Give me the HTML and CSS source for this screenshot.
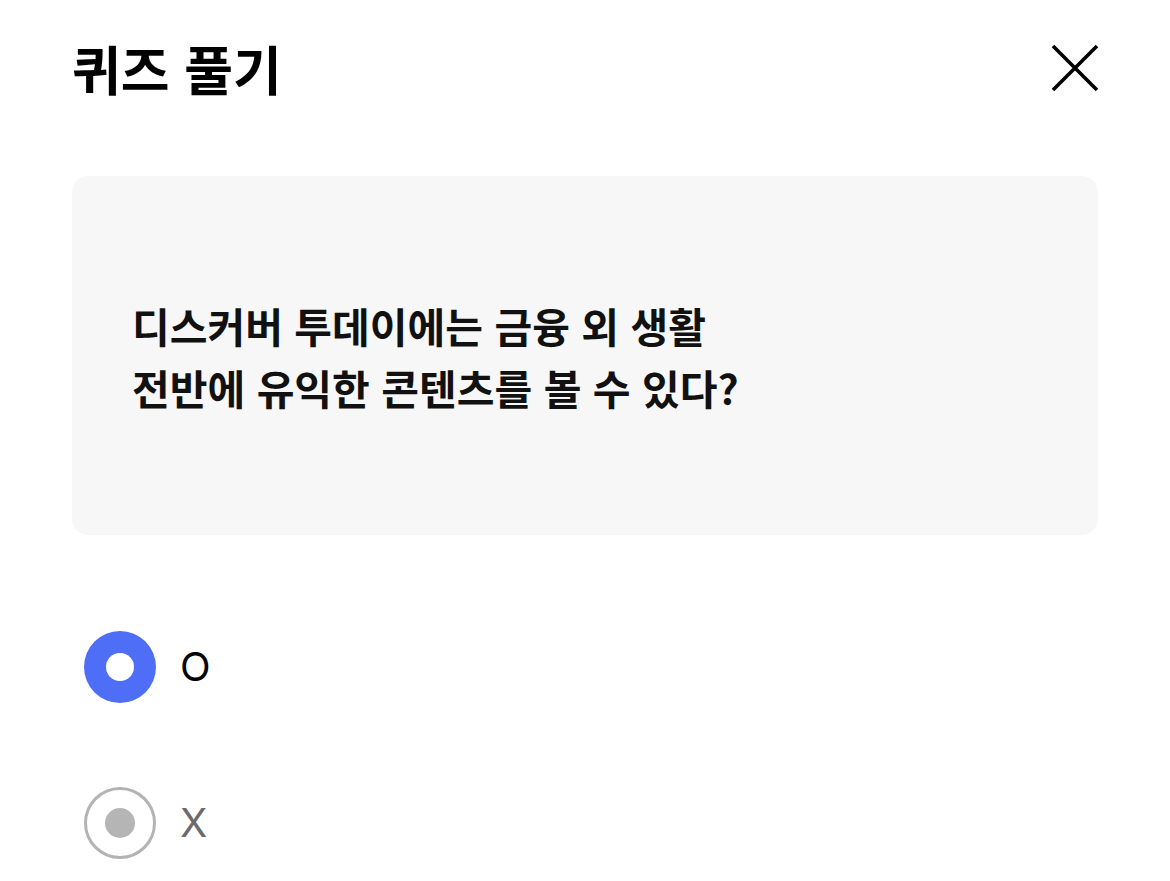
FILE: index.html
```html
<!DOCTYPE html>
<html lang="ko">
<head>
<meta charset="utf-8">
<title>퀴즈 풀기</title>
<link rel="stylesheet" href="styles.css">
</head>
<body>
<div class="page">
  <header class="header">
    <h1 class="title">퀴즈 풀기</h1>
    <button class="close" aria-label="닫기">
      <svg width="48" height="48" viewBox="0 0 48 48"><path d="M2 2 L46 46 M46 2 L2 46" stroke="#000" stroke-width="3.6" fill="none"/></svg>
    </button>
  </header>
  <section class="card">
    <p class="question">디스커버 투데이에는 금융 외 생활<br>전반에 유익한 콘텐츠를 볼 수 있다?</p>
  </section>
  <ul class="options">
    <li class="option selected"><span class="radio"><span class="dot"></span></span><span class="label">O</span></li>
    <li class="option"><span class="radio"><span class="dot"></span></span><span class="label">X</span></li>
  </ul>
</div>
</body>
</html>
```
FILE: styles.css
```css
html, body {
  margin: 0;
  padding: 0;
  background: #fff;
}
body {
  font-family: "Noto Sans CJK KR", "Noto Sans", sans-serif;
  color: #000;
}
.page {
  padding: 0 72px;
}
.header {
  display: flex;
  align-items: center;
  justify-content: space-between;
  height: 136px;
}
.title {
  margin: 0;
  font-size: 53px;
  font-weight: 700;
  line-height: 1;
  margin-left: 0;
}
.close {
  border: 0;
  background: none;
  padding: 0;
  margin-right: -1px;
  width: 48px;
  height: 48px;
  display: flex;
  align-items: center;
  justify-content: center;
}
.card {
  margin-top: 40px;
  height: 359px;
  background: #f7f7f7;
  border-radius: 16px;
  display: flex;
  align-items: center;
  padding: 0 60px;
  box-sizing: border-box;
}
.question {
  margin: 0;
  font-size: 41px;
  font-weight: 700;
  line-height: 62px;
  color: #111;
}
.options {
  list-style: none;
  margin: 96px 0 0;
  padding: 0 0 0 12px;
  display: flex;
  flex-direction: column;
  gap: 84px;
}
.option {
  display: flex;
  align-items: center;
  gap: 24px;
  height: 72px;
}
.radio {
  width: 72px;
  height: 72px;
  border-radius: 50%;
  box-sizing: border-box;
  border: 3px solid #b3b3b3;
  background: #fff;
  display: flex;
  align-items: center;
  justify-content: center;
}
.radio .dot {
  width: 30px;
  height: 30px;
  border-radius: 50%;
  background: #b5b5b5;
}
.option.selected .radio {
  border: 0;
  background: #4f6ef7;
}
.option.selected .radio .dot {
  width: 28px;
  height: 28px;
  background: #fff;
}
.label {
  font-family: "Inter", "Noto Sans", sans-serif;
  font-size: 40px;
  font-weight: 400;
  color: #000;
  line-height: 1;
}
.option:not(.selected) .label {
  color: #6b6b6b;
}
```
